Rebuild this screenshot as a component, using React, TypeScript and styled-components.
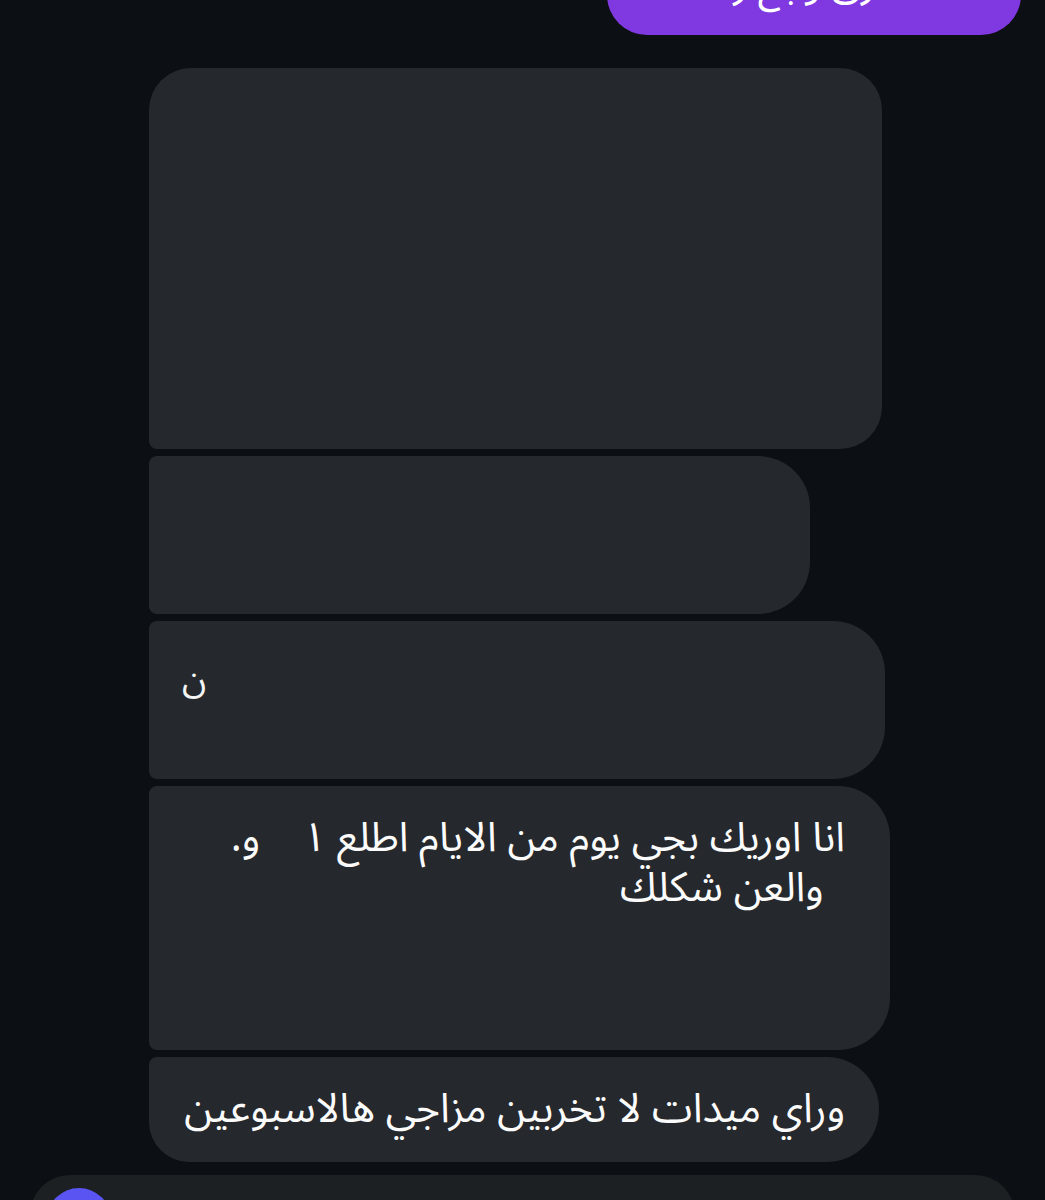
import React from "react";
import styled, { createGlobalStyle } from "styled-components";

const Global = createGlobalStyle`
  html, body { margin: 0; padding: 0; background: #0c0f13; }
  body { font-family: "Noto Sans Arabic", "Noto Sans", "DejaVu Sans", sans-serif; overflow: hidden; }
`;

const Screen = styled.div`
  width: 1045px;
  height: 1200px;
  background: #0c0f13;
  display: flex;
  flex-direction: column;
  overflow: hidden;
`;

const SentRow = styled.div`
  display: flex;
  justify-content: flex-end;
  padding-right: 24px;
  margin-top: -48px;
  margin-bottom: 33px;
`;

const SentBubble = styled.div`
  width: 414px;
  height: 83px;
  background: #8039e0;
  border-radius: 40px;
  color: #fff;
  font-size: 40px;
  line-height: 1;
  direction: rtl;
  display: flex;
  align-items: flex-end;
  justify-content: center;
  padding-bottom: 30px;
  box-sizing: border-box;
  overflow: hidden;
`;

const Thread = styled.div`
  display: flex;
  flex-direction: column;
  align-items: flex-start;
  gap: 7px;
  padding-left: 149px;
`;

const Bubble = styled.div<{ $w: number; $h: number; $tl: number; $tr: number; $br: number; $bl: number }>`
  width: ${(p) => p.$w}px;
  height: ${(p) => p.$h}px;
  box-sizing: border-box;
  background: #25282c;
  border-radius: ${(p) => `${p.$tl}px ${p.$tr}px ${p.$br}px ${p.$bl}px`};
  color: #fbfbfb;
  font-size: 41px;
  line-height: 50px;
  direction: rtl;
  text-align: right;
  padding: 27px 0 0 0;
`;

const TextBlock = styled.div<{ $right: number }>`
  padding-right: ${(p) => p.$right}px;
`;

const LoneGlyph = styled.div`
  direction: rtl;
  text-align: left;
  font-size: 36px;
  line-height: 1;
  padding: 14px 0 0 33px;
  color: #f4f4f4;
`;

const Composer = styled.div`
  margin: 13px 30px 0 30px;
  height: 80px;
  background: #1d2023;
  border-radius: 40px 40px 0 0;
  display: flex;
  align-items: flex-start;
  padding: 13px 0 0 17px;
  box-sizing: border-box;
`;

const Avatar = styled.div`
  width: 64px;
  height: 64px;
  border-radius: 50%;
  background: #5a55f2;
`;

export default function App() {
  return (
    <Screen>
      <Global />
      <SentRow>
        <SentBubble>فرق وجع ر</SentBubble>
      </SentRow>
      <Thread>
        <Bubble $w={733} $h={381} $tl={42} $tr={42} $br={42} $bl={8} />
        <Bubble $w={661} $h={158} $tl={8} $tr={52} $br={52} $bl={8} />
        <Bubble $w={736} $h={158} $tl={8} $tr={52} $br={52} $bl={8}>
          <LoneGlyph>ن</LoneGlyph>
        </Bubble>
        <Bubble $w={741} $h={264} $tl={8} $tr={52} $br={52} $bl={8}>
          <TextBlock $right={45}>
            انا اوريك بجي يوم من الايام اطلع ١ &nbsp;&nbsp; و.
            <br />
            &nbsp;&nbsp;والعن شكلك
          </TextBlock>
        </Bubble>
        <Bubble $w={730} $h={105} $tl={8} $tr={52} $br={52} $bl={40}>
          <TextBlock $right={34}>وراي ميدات لا تخربين مزاجي هالاسبوعين</TextBlock>
        </Bubble>
      </Thread>
      <Composer>
        <Avatar />
      </Composer>
    </Screen>
  );
}
